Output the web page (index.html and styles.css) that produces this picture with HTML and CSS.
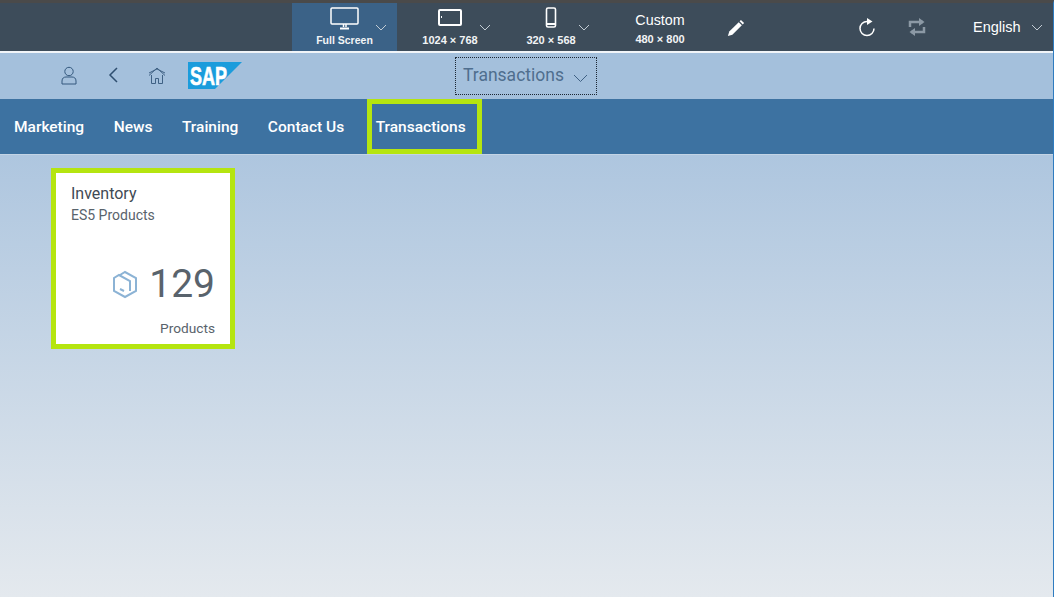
FILE: index.html
```html
<!DOCTYPE html>
<html lang="en">
<head>
  <meta charset="UTF-8" />
  <title>Transactions</title>
  <link rel="stylesheet" href="styles.css">
</head>
<body>
  <div class="frame">
    <!-- Preview toolbar -->
    <div class="toolbar">
      <div class="device device-full active">
        <div class="device-main">
          <svg class="device-icon" width="32" height="24" viewBox="0 0 32 24" fill="none" stroke="#fff"><rect x="2" y="2" width="27" height="16" rx="1" stroke-width="1.5"/><path d="M11 22.500h9" stroke-width="2"/><path d="M14.500 18v3M17 18v3" stroke-width="1.500"/></svg>
          <span class="device-label label-full">Full Screen</span>
        </div>
        <svg class="chevron" width="12" height="7" viewBox="0 0 12 7" fill="none" stroke="#c3ccd4"><path d="M1 1l5 5 5-5"/></svg>
      </div>
      <div class="device device-tablet">
        <div class="device-main">
          <svg class="device-icon" width="24" height="24" viewBox="0 0 24 24" fill="none" stroke="#fff"><rect x="1" y="4" width="22" height="15" rx="1" stroke-width="2"/><path d="M3 11h1" stroke-width="2"/></svg>
          <span class="device-label">1024 × 768</span>
        </div>
        <svg class="chevron" width="12" height="7" viewBox="0 0 12 7" fill="none" stroke="#c3ccd4"><path d="M1 1l5 5 5-5"/></svg>
      </div>
      <div class="device device-phone">
        <div class="device-main">
          <svg class="device-icon" width="12" height="24" viewBox="0 0 12 24" fill="none" stroke="#fff"><rect x="1.500" y="2" width="9" height="19" rx="1.500" stroke-width="1.600"/><path d="M1.500 18h9" stroke-width="2"/></svg>
          <span class="device-label">320 × 568</span>
        </div>
        <svg class="chevron" width="12" height="7" viewBox="0 0 12 7" fill="none" stroke="#c3ccd4"><path d="M1 1l5 5 5-5"/></svg>
      </div>
      <div class="device-custom">
        <span class="custom-title">Custom</span>
        <span class="device-label">480 × 800</span>
      </div>
      <svg class="pencil" width="18" height="18" viewBox="0 0 20 20" fill="#fff"><path d="M1 19l1.500-5L13 3.500l3.500 3.500L6 17.500z"/><path d="M14 2.500l1.500-1.500 3.500 3.500-1.500 1.500z"/></svg>
      <div class="toolbar-right">
        <svg width="18" height="20" viewBox="0 0 18 20" fill="none" stroke="#fff" stroke-width="1.500"><path d="M9 4.500A7 7 0 1 0 16 11.500"/><path d="M9 1l5.500 3.500L9 8z" fill="#fff" stroke="none"/></svg>
        <svg class="swap" width="18" height="18" viewBox="0 0 18 18" fill="none" stroke="#8c99a5" stroke-width="2.500"><path d="M2 9V4h13M16 9v5H3"/><path d="M11 0l5.500 4-5.500 4zM7 10l-5.500 4 5.500 4z" fill="#8c99a5" stroke="none"/></svg>
        <span class="lang">English</span>
        <svg class="chevron-lang" width="12" height="7" viewBox="0 0 12 7" fill="none" stroke="#c3ccd4"><path d="M1 1l5 5 5-5"/></svg>
      </div>
    </div>

    <!-- Shell header -->
    <div class="header">
      <div class="header-icons">
        <svg width="16" height="19" viewBox="0 0 16 19" fill="none" stroke="#34597e"><circle cx="8" cy="5.500" r="4.200"/><path d="M1 18v-3c0-3 2-4 4-4h6c2 0 4 1 4 4v3z"/></svg>
        <svg class="back" width="10" height="16" viewBox="0 0 10 16" fill="none" stroke="#2f4f70" stroke-width="1.500"><path d="M9 1L2 8l7 7"/></svg>
        <svg class="home" width="18" height="17" viewBox="0 0 18 17" fill="none" stroke="#3f6184"><path d="M1 8.500L9 1l8 7.500M3.500 8v8.500h4v-5h3v5h4V8M1 6l8-4 8 4"/></svg>
        <svg class="logo" width="54" height="27" viewBox="0 0 54 27"><path d="M0 0h54L27 27H0z" fill="#1b9cdc"/><text x="2" y="22.500" class="logo-text" textLength="37" lengthAdjust="spacingAndGlyphs">SAP</text></svg>
      </div>
      <button class="menu-button">
        <span>Transactions</span>
        <svg class="menu-chevron" width="15" height="9" viewBox="0 0 15 9" fill="none" stroke="#3f6184"><path d="M1 1l6.500 6.500L14 1"/></svg>
      </button>
    </div>

    <!-- Groups -->
    <div class="nav">
      <a class="nav-item">Marketing</a>
      <a class="nav-item">News</a>
      <a class="nav-item">Training</a>
      <a class="nav-item">Contact Us</a>
      <a class="nav-item nav-marked">Transactions</a>
    </div>

    <div class="content">
      <div class="tile">
        <div class="tile-title">Inventory</div>
        <div class="tile-sub">ES5 Products</div>
        <div class="tile-value">
          <svg width="26" height="29" viewBox="0 0 26 29" fill="none" stroke="#8cb3d5" stroke-width="2"><path d="M8 5l5-3 11 6v13l-11 6-11-6V8l5-3 11 6v10"/><path d="M8 19l4 2"/></svg>
          <span class="tile-number">129</span>
        </div>
        <div class="tile-unit">Products</div>
      </div>
    </div>
  </div>
</body>
</html>
```

FILE: styles.css
```css
html, body {
  margin: 0;
  height: 100%;
}

body {
  font-family: "Liberation Sans", Arial, sans-serif;
  overflow: hidden;
}

.frame {
  width: 1054px;
  height: 597px;
  display: flex;
  flex-direction: column;
  border-right: 1px solid #2f7cc0;
  border-top: 3px solid #4a4a4a;
  box-sizing: border-box;
}

.toolbar {
  height: 48px;
  flex: none;
  background: #3d4c5a;
  display: flex;
  align-items: stretch;
  padding-left: 292px;
  color: #fff;
  border-bottom: 2px solid #f0f4f8;
}

.device {
  display: flex;
  position: relative;
}

.device-full { width: 105px; }
.device-tablet { width: 104px; }
.device-phone { width: 99px; }

.device.active {
  background: #3b6287;
}

.device-main {
  width: 88px;
  display: flex;
  flex-direction: column;
  align-items: center;
  padding-top: 3px;
}

.device-full .device-main { width: 105px; }
.device-tablet .device-main { margin-left: 9px; }
.device-phone .device-main { margin-left: 6px; }

.device-icon {
  height: 24px;
}

.device-label {
  font-size: 11px;
  font-weight: bold;
  line-height: 14px;
  margin-top: 3px;
  color: #f2f4f6;
}

.label-full {
  font-size: 10.5px;
}

.chevron {
  position: absolute;
  top: 21px;
  left: 83px;
}

.device-tablet .chevron { left: 82px; }
.device-phone .chevron { left: 77px; }

.device-custom {
  width: 70px;
  display: flex;
  flex-direction: column;
  align-items: center;
  padding-top: 9px;
  margin-left: 25px;
}

.custom-title {
  font-size: 14.3px;
  line-height: 16px;
}

.device-custom .device-label {
  margin-top: 4px;
}

.pencil {
  margin: 16px 0 0 32px;
}

.toolbar-right {
  margin-left: 113px;
  display: flex;
  align-items: center;
}

.swap {
  margin-left: 32px;
}

.lang {
  font-size: 14.5px;
  margin-left: 47px;
}

.chevron-lang {
  margin-left: 10px;
}

.header {
  height: 46px;
  flex: none;
  background: #a4c0dc;
  position: relative;
  display: flex;
  align-items: center;
  justify-content: center;
  box-sizing: border-box;
}

.header-icons {
  position: absolute;
  left: 61px;
  top: 7px;
  display: flex;
  align-items: center;
  height: 30px;
}

.back { margin-left: 31px; }
.home { margin-left: 30px; }
.logo { margin-left: 22px; }

.logo-text {
  font-family: "Liberation Sans", sans-serif;
  font-weight: bold;
  font-size: 25px;
  fill: #fff;
  stroke: #fff;
  stroke-width: 0.6;
}

.menu-button {
  width: 142px;
  height: 38px;
  margin-right: 2px;
  display: flex;
  align-items: center;
  justify-content: center;
  gap: 9px;
  background: none;
  border: 1px dotted #1c2733;
  font-family: Roboto, sans-serif;
  font-size: 17.5px;
  color: #4f6e8e;
  padding: 0 0 2px;
}

.menu-chevron {
  margin-top: 6px;
}

.nav {
  height: 55px;
  flex: none;
  background: #3d72a1;
  display: flex;
  padding-left: 14px;
  gap: 29.5px;
  border-bottom: 1px solid #c3d4e5;
}

.nav-item {
  font-family: Roboto, sans-serif;
  font-weight: 500;
  font-size: 15.5px;
  line-height: 57px;
  color: #fff;
}

.nav-marked {
  border: 5px solid #b5e510;
  margin: 0 0 0 -7px;
  padding: 0 11px 0 4px;
  line-height: 47px;
}

.content {
  flex: 1;
  background: linear-gradient(#aec6df, #e4e9ee);
  padding: 13px 0 0 51px;
}

.tile {
  width: 184px;
  height: 181px;
  box-sizing: border-box;
  background: #fff;
  border: 5px solid #b5e510;
  padding: 11px 15px 0;
  color: #59636c;
  font-family: Roboto, sans-serif;
}

.tile-title {
  font-size: 16px;
  line-height: 20px;
  color: #3f4a54;
}

.tile-sub {
  font-size: 14px;
  line-height: 18px;
  margin-top: 2px;
}

.tile-value {
  display: flex;
  justify-content: flex-end;
  align-items: center;
  gap: 11px;
  margin-top: 36px;
}

.tile-number {
  font-size: 39px;
  line-height: 48px;
  color: #59636c;
}

.tile-unit {
  font-size: 13.7px;
  line-height: 18px;
  text-align: right;
  margin-top: 11px;
}
```
